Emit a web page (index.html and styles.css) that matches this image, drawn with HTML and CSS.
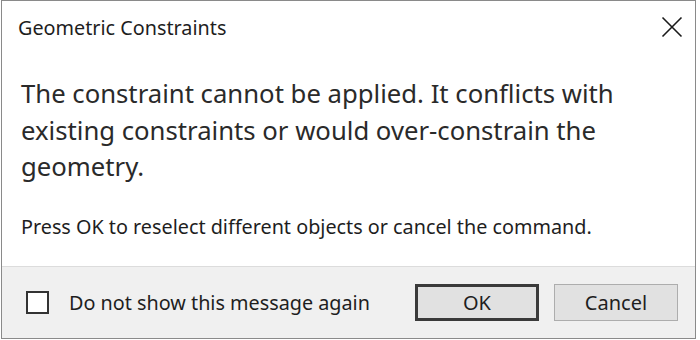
FILE: index.html
```html
<!DOCTYPE html>
<html>
<head>
<meta charset="utf-8">
<link rel="stylesheet" href="styles.css">
</head>
<body>
<div class="window">
  <div class="titlebar">
    <span class="title">Geometric Constraints</span>
    <svg class="close" width="22" height="22" viewBox="0 0 22 22"><path d="M1.5 1.5 L20.5 20.5 M20.5 1.5 L1.5 20.5" stroke="#1a1a1a" stroke-width="1.6" fill="none"/></svg>
  </div>
  <div class="content">
    <p class="message">The constraint cannot be applied. It conflicts with existing constraints or would over-constrain the geometry.</p>
    <p class="note">Press OK to reselect different objects or cancel the command.</p>
  </div>
  <div class="footer">
    <label class="check"><span class="box"></span><span>Do not show this message again</span></label>
    <div class="buttons">
      <button class="btn default">OK</button>
      <button class="btn">Cancel</button>
    </div>
  </div>
</div>
</body>
</html>
```
FILE: styles.css
```css
html, body {
  margin: 0;
  padding: 0;
  background: #ffffff;
}
body {
  font-family: "Noto Sans", "Open Sans", sans-serif;
  color: #222;
}
.window {
  box-sizing: border-box;
  margin-left: 1px;
  width: 695px;
  height: 339px;
  border: 1px solid #8a8a8a;
  display: flex;
  flex-direction: column;
  background: #fff;
}
.titlebar {
  height: 52px;
  display: flex;
  align-items: center;
  justify-content: space-between;
  padding: 0 12px 0 16px;
  flex: none;
}
.title {
  font-size: 19.8px;
  color: #1e1e1e;
}
.close {
  display: block;
}
.content {
  flex: 1;
  padding: 23px 0 0 19px;
}
.message {
  margin: 0;
  font-size: 25.7px;
  line-height: 36.5px;
  width: 640px;
  color: #2a2a2a;
}
.note {
  margin: 28px 0 0;
  font-size: 19.8px;
  line-height: 26px;
  color: #1e1e1e;
}
.footer {
  flex: none;
  height: 72px;
  box-sizing: border-box;
  background: #f0f0f0;
  border-top: 1px solid #dcdcdc;
  display: flex;
  align-items: center;
  justify-content: space-between;
  padding: 0 17px 0 24px;
}
.check {
  display: flex;
  align-items: center;
  gap: 20px;
  font-size: 19.8px;
  color: #1e1e1e;
}
.box {
  box-sizing: border-box;
  width: 23px;
  height: 23px;
  border: 2px solid #333;
  background: #fff;
}
.buttons {
  display: flex;
  gap: 15px;
}
.btn {
  box-sizing: border-box;
  width: 124px;
  height: 37px;
  background: #e1e1e1;
  border: 1px solid #adadad;
  font-family: "Noto Sans", "Open Sans", sans-serif;
  font-size: 20px;
  color: #1e1e1e;
  padding: 0;
}
.btn.default {
  border: 3px solid #3a3a3a;
}
```
